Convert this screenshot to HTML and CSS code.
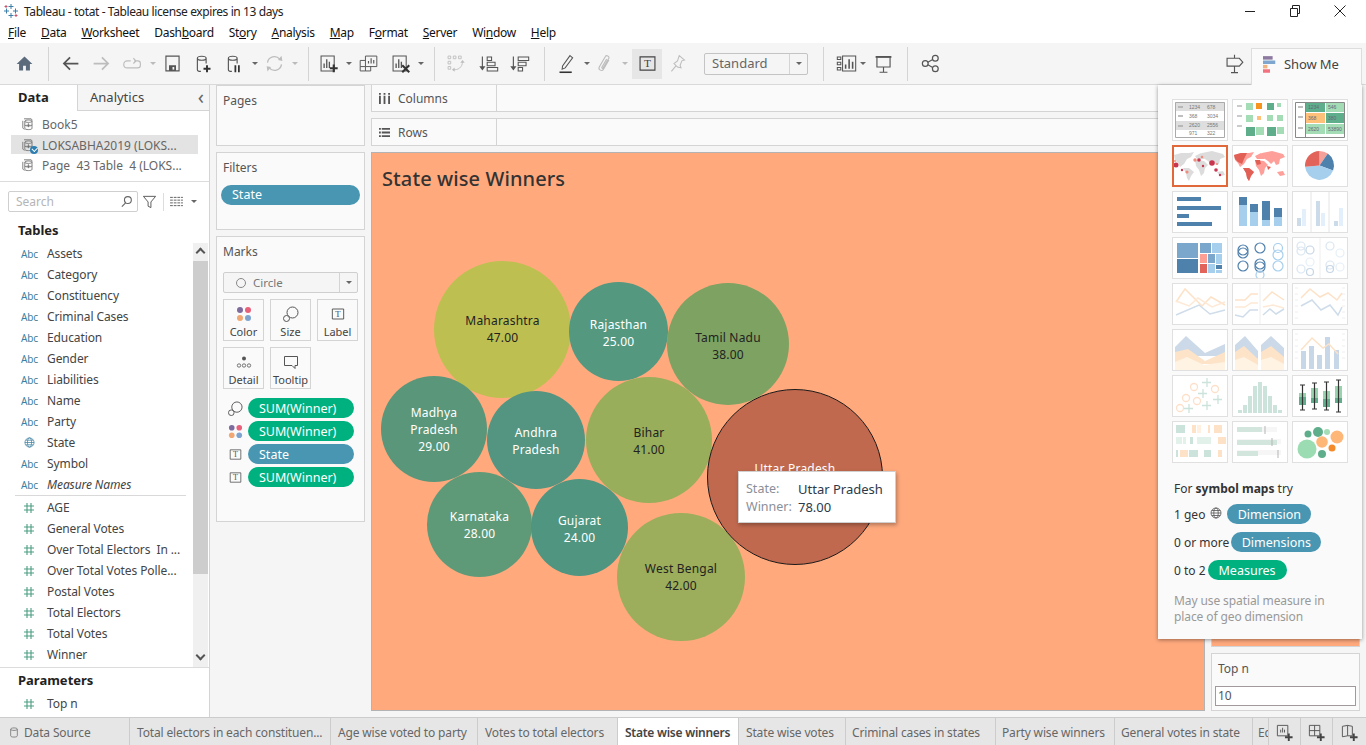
FILE: index.html
```html
<!DOCTYPE html>
<html lang="en">
<head>
  <meta charset="UTF-8" />
  <title>Tableau - totat</title>
  <link rel="stylesheet" href="styles.css">
</head>
<body>
  <!-- icon sprite -->
  <svg class="sprite" xmlns="http://www.w3.org/2000/svg">
    <symbol id="i-home" viewBox="0 0 24 24"><path fill="#5b6b7c" d="M12 4 3 12.6h2.8V20h4.6v-5.4h3.2V20h4.6v-7.4H21z"/></symbol>
    <symbol id="i-back" viewBox="0 0 24 24"><path fill="none" stroke="currentColor" stroke-width="2" d="M21 12H5M11.5 5 4.5 12l7 7"/></symbol>
    <symbol id="i-fwd" viewBox="0 0 24 24"><path fill="none" stroke="currentColor" stroke-width="2" d="M3 12h16M12.500 5l7 7-7 7"/></symbol>
    <symbol id="i-redo" viewBox="0 0 24 24"><path fill="none" stroke="currentColor" stroke-width="1.3" d="M10 9H6a3 3 0 0 0 0 8h12a3 3 0 0 0 3-3v-2a3 3 0 0 0-3-3h-4M13 6l3 3-3 3"/></symbol>
    <symbol id="i-save" viewBox="0 0 24 24"><path fill="none" stroke="currentColor" stroke-width="1.3" d="M4.500 3.500h15v17h-15z"/><path fill="currentColor" d="M8 14h8v6.500H8z"/><path fill="#f5f5f5" d="M12 16h2v3h-2z"/></symbol>
    <symbol id="i-dsnew" viewBox="0 0 24 24"><path fill="none" stroke="currentColor" stroke-width="1.3" d="M5 6c0-3 10-3 10 0s-10 3-10 0v13c0 1.500 2 2 4 2M15 6v6"/><path fill="none" stroke="#333" stroke-width="2.200" d="M16 14v8M12 18h8"/></symbol>
    <symbol id="i-dspause" viewBox="0 0 24 24"><path fill="none" stroke="currentColor" stroke-width="1.300" d="M5 6c0-3 10-3 10 0s-10 3-10 0v13c0 1.500 2 2 4 2M15 6v6"/><path fill="none" stroke="#333" stroke-width="2" d="M13 14v8M17 14v8"/></symbol>
    <symbol id="i-refresh" viewBox="0 0 24 24"><path fill="none" stroke="currentColor" stroke-width="1.500" d="M4 11a8 8 0 0 1 14-4M20 13a8 8 0 0 1-14 4"/><path fill="currentColor" d="m16 8 5 1-1-6zM8 16l-5-1 1 6z"/></symbol>
    <symbol id="i-sheetnew" viewBox="0 0 24 24"><path fill="none" stroke="currentColor" stroke-width="1.200" d="M3.500 3.500h15v17h-15z"/><path fill="none" stroke="currentColor" stroke-width="1.500" d="M7 17v-5M10 17V7M13 17v-7"/><path fill="none" stroke="#333" stroke-width="2.400" d="M18 13v9M13.500 17.500h9"/></symbol>
    <symbol id="i-dup" viewBox="0 0 24 24"><path fill="none" stroke="currentColor" stroke-width="1.100" d="M8.500 3.500h13v12h-13zM8.500 15.500h-6v-7h6M8.500 20.500h6V15.500M2.500 15.500v5h6v-5"/><path fill="none" stroke="currentColor" stroke-width="1.300" d="M12 12V9M15 12V6M18 12V8"/></symbol>
    <symbol id="i-clear" viewBox="0 0 24 24"><path fill="none" stroke="currentColor" stroke-width="1.200" d="M3.500 3.500h15v17h-15z"/><path fill="none" stroke="currentColor" stroke-width="1.500" d="M7 17v-5M10 17V7M13 17v-7"/><path fill="none" stroke="#333" stroke-width="2.400" d="m14 14 8 8M22 14l-8 8"/></symbol>
    <symbol id="i-swap" viewBox="0 0 24 24"><path fill="none" stroke="currentColor" stroke-width="1" d="M3.500 3.500h3v3h-3zM9.500 3.500h3v3h-3zM15.500 3.500h3v3h-3zM3.500 9.500h3v3h-3zM3.500 15.500h3v3h-3zM9 19c6 1 11-3 11-9"/><path fill="currentColor" d="m17.500 11 2.500-3 2.500 3zM11 16.500 8 19l3 2.500z"/></symbol>
    <symbol id="i-sortup" viewBox="0 0 24 24"><path fill="none" stroke="currentColor" stroke-width="1.300" d="M5 4v14"/><path fill="currentColor" d="M1.500 15h7L5 20z"/><path fill="none" stroke="currentColor" stroke-width="1.200" d="M10.500 4.500h5v4h-5zM10.500 10.500h9v4h-9zM10.500 16.500h12v4h-12z"/></symbol>
    <symbol id="i-sortdn" viewBox="0 0 24 24"><path fill="none" stroke="currentColor" stroke-width="1.300" d="M5 4v14"/><path fill="currentColor" d="M1.500 15h7L5 20z"/><path fill="none" stroke="currentColor" stroke-width="1.200" d="M10.500 4.500h12v4h-12zM10.500 10.500h9v4h-9zM10.500 16.500h5v4h-5z"/></symbol>
    <symbol id="i-pen" viewBox="0 0 24 24"><path fill="none" stroke="currentColor" stroke-width="1.200" d="M16 3l3 2.500L10.500 17 7 18.500l.5-3.800z"/><path fill="none" stroke="#333" stroke-width="1.800" d="M4 22h14"/></symbol>
    <symbol id="i-clip" viewBox="0 0 24 24"><path fill="none" stroke="currentColor" stroke-width="1.300" d="M17 8l-6.500 11c-1.500 2.500-6 0-4.500-3l7-12c1-2 5-.5 4 2l-6.500 11c-.5 1-2 .3-1.500-.8L14.500 7"/></symbol>
    <symbol id="i-t" viewBox="0 0 24 24"><path fill="none" stroke="currentColor" stroke-width="1.300" d="M3.500 4.500h17v15h-17z"/><text x="12" y="16.500" text-anchor="middle" font-family="Liberation Serif, serif" font-size="13" fill="currentColor">T</text></symbol>
    <symbol id="i-pin" viewBox="0 0 24 24"><path fill="none" stroke="currentColor" stroke-width="1.200" d="M14 3l6 5-3 1-2 5 1 3-4-1-4-4 4-3zM10 15l-5 6"/></symbol>
    <symbol id="i-viz" viewBox="0 0 24 24"><path fill="none" stroke="currentColor" stroke-width="1.200" d="M1.500 4.500h4v3h-4zM1.500 10.500h4v3h-4zM1.500 16.500h4v3h-4zM7.500 3.500h15v17h-15z"/><path fill="none" stroke="currentColor" stroke-width="1.800" d="M11 18v-5M15 18V7M19 18v-8"/></symbol>
    <symbol id="i-present" viewBox="0 0 24 24"><path fill="none" stroke="currentColor" stroke-width="1.300" d="M4.500 5v11h15V5M12 16v6M7.500 22h9"/><path fill="none" stroke="currentColor" stroke-width="2.200" d="M3 4.500h18"/></symbol>
    <symbol id="i-share" viewBox="0 0 24 24"><g fill="none" stroke="currentColor" stroke-width="1.400"><circle cx="6" cy="12" r="3.300"/><circle cx="17.500" cy="6" r="3.300"/><circle cx="17.500" cy="18" r="3.300"/><path d="m9 10.500 5.500-3M9 13.500l5.500 3"/></g></symbol>
    <symbol id="i-sign" viewBox="0 0 24 24"><path fill="none" stroke="currentColor" stroke-width="1.300" d="M12 2v4M3.500 6h14l4 4.500-4 4.500h-14zM12 15v7.500M8 22.500h8"/></symbol>
    <symbol id="i-showme" viewBox="0 0 16 20"><path fill="#8d7aa0" d="M0 1h11v4H0z"/><path fill="#7fa6cf" d="M0 6h14v4H0z"/><path fill="#f0b27f" d="M0 11h5v4H0z"/><path fill="#f4727f" d="M0 16h8v4H0z"/></symbol>
    <symbol id="i-ds" viewBox="0 0 20 20"><g fill="none" stroke="currentColor" stroke-width="1"><path d="M5 3.500h9l1.500 2M3.500 6v9l2 2"/><path d="M6 6.500c0-2 9-2 9 0s-9 2-9 0v9c0 2 9 2 9 0v-9"/><path d="M6 11c0 2 9 2 9 0M10.500 9v5M8 11.500h5"/></g></symbol>
    <symbol id="i-search" viewBox="0 0 14 14"><g fill="none" stroke="#666" stroke-width="1.200"><circle cx="8.500" cy="5.500" r="3.700"/><path d="M6 8.500 2 12.500"/></g></symbol>
    <symbol id="i-funnel" viewBox="0 0 16 16"><path fill="none" stroke="#555" stroke-width="1" d="M1.500 2.500h13l-5 6v6l-3-1.500V8.500z"/></symbol>
    <symbol id="i-list" viewBox="0 0 14 12"><path fill="none" stroke="#555" stroke-width="1" stroke-dasharray="3 1" d="M0 1.500h3M0 4.500h3M0 7.500h3M0 10.500h3M4 1.500h10M4 4.500h10M4 7.500h10M4 10.500h10"/></symbol>
    <symbol id="i-hash" viewBox="0 0 12 12"><path fill="none" stroke="#4b9e82" stroke-width="1.100" d="M4 1v10M8 1v10M1 4h10M1 8h10"/></symbol>
    <symbol id="i-globe" viewBox="0 0 12 12"><g fill="none" stroke="currentColor" stroke-width=".8"><circle cx="6" cy="6" r="5"/><ellipse cx="6" cy="6" rx="2.200" ry="5"/><path d="M1 6h10M1.800 3.500h8.400M1.800 8.500h8.400"/></g></symbol>
    <symbol id="i-cols" viewBox="0 0 12 12"><path fill="#555" d="M0 3h2v9H0zM5 3h2v9H5zM10 3h2v9h-2zM0 0h2v2H0zM5 0h2v2H5zM10 0h2v2h-2z"/></symbol>
    <symbol id="i-rows" viewBox="0 0 12 12"><path fill="#555" d="M3 1h9v2H3zM3 5h9v2H3zM3 9h9v2H3zM0 1h2v2H0zM0 5h2v2H0zM0 9h2v2H0z"/></symbol>
    <symbol id="i-dots" viewBox="0 0 16 16"><circle cx="4" cy="4" r="3" fill="#7d6b9e"/><circle cx="12" cy="4" r="3" fill="#e8607a"/><circle cx="4" cy="12" r="3" fill="#f0a773"/><circle cx="12" cy="12" r="3" fill="#7fa3cf"/></symbol>
    <symbol id="i-size" viewBox="0 0 16 16"><g fill="#fafafa" stroke="#555" stroke-width="1"><circle cx="9.500" cy="6.500" r="5.500"/><circle cx="3.500" cy="12.500" r="3"/></g></symbol>
    <symbol id="i-detail" viewBox="0 0 16 12"><circle cx="8" cy="2.500" r="2" fill="#555"/><g fill="none" stroke="#555" stroke-width=".8"><circle cx="3" cy="9.500" r="1.700"/><circle cx="8" cy="9.500" r="1.700"/><circle cx="13" cy="9.500" r="1.700"/></g></symbol>
    <symbol id="i-tip" viewBox="0 0 16 16"><path fill="none" stroke="#555" stroke-width="1" d="M1.500 2.500h13v9h-2.500v3l-3-3h-7.500z"/></symbol>
    <symbol id="i-newdash" viewBox="0 0 20 20"><path fill="none" stroke="#555" stroke-width="1" d="M2.500 2.500h11v11h-11zM2.500 8h11M8 2.500v11"/><path fill="none" stroke="#444" stroke-width="2" d="M14.500 11v8M10.500 15h8"/></symbol>
    <symbol id="i-newstory" viewBox="0 0 20 20"><path fill="none" stroke="#555" stroke-width="1" d="M2.500 3.500 8 2.500l5 1v10H8l-5.500 1zM8 2.500v11"/><path fill="none" stroke="#444" stroke-width="2" d="M14.500 11v8M10.500 15h8"/></symbol>
    <symbol id="i-newsheet" viewBox="0 0 20 20"><path fill="none" stroke="#555" stroke-width="1" d="M2.500 2.500h11v11h-11z"/><path fill="none" stroke="#555" d="M6 10V7M8 10V5M10 10V7"/><path fill="none" stroke="#444" stroke-width="2" d="M14.500 11v8M10.500 15h8"/></symbol>
    <symbol id="world" viewBox="0 0 56 42"><path d="M2 10l7-2 8 0 5-1-3 5-4 2-3 5-4 3-2-4-3-3zM11 23l6 0 5 4-3 4-2 5-2-3-1-5zM23 11l6-3 4 2-1 4-7 0zM23 15l9 1 4 4-3 3-1 5-3 3-2-6-3-4zM30 8l10-2 11 3 2 3-5 2-1 5-3 1-2-4-3 3-3-3-3-2-3-1zM45 27l6-1 2 4-5 1z"/></symbol>
  </svg>

  <div class="titlebar">
    <svg class="app-logo" viewBox="0 0 16 16"><g fill="none" stroke="#3d7ea6" stroke-width="1"><path d="M8 1v5M5.500 3.500h5M8 10v5M5.500 12.500h5M1 8h5M3.500 5.500v5M10 8h5M12.500 5.500v5"/></g><g fill="none" stroke="#c8546b" stroke-width="1"><path d="M3 2v3M1.500 3.500h3M13 11v3M11.500 12.500h3"/></g></svg>
    <span class="title-text">Tableau - totat - Tableau license expires in 13 days</span>
    <div class="win-controls">
      <svg viewBox="0 0 12 12"><path stroke="#222" d="M1 6.500h10"/></svg>
      <svg viewBox="0 0 12 12"><path fill="none" stroke="#222" d="M1.500 3.500h7v8h-7zM3.500 3.500v-3h7v8h-2"/></svg>
      <svg viewBox="0 0 12 12"><path stroke="#222" d="m.5.500 11 11M11.500.5l-11 11"/></svg>
    </div>
  </div>

  <div class="menubar">
    <span><u>F</u>ile</span><span><u>D</u>ata</span><span><u>W</u>orksheet</span><span>Dash<u>b</u>oard</span><span>St<u>o</u>ry</span><span><u>A</u>nalysis</span><span><u>M</u>ap</span><span>F<u>o</u>rmat</span><span><u>S</u>erver</span><span>Wi<u>n</u>dow</span><span><u>H</u>elp</span>
  </div>

  <div class="toolbar">
    <span class="tool home"><svg><use href="#i-home"/></svg></span>
    <i class="sep"></i>
    <span class="tool ml6"><svg><use href="#i-back"/></svg></span>
    <span class="tool off"><svg><use href="#i-fwd"/></svg></span>
    <span class="tool off"><svg><use href="#i-redo"/></svg></span><i class="caret off"></i>
    <span class="tool"><svg><use href="#i-save"/></svg></span>
    <span class="tool"><svg><use href="#i-dsnew"/></svg></span>
    <span class="tool"><svg><use href="#i-dspause"/></svg></span><i class="caret"></i>
    <span class="tool off"><svg><use href="#i-refresh"/></svg></span><i class="caret off"></i>
    <i class="sep ml9"></i>
    <span class="tool ml4"><svg><use href="#i-sheetnew"/></svg></span><i class="caret"></i>
    <span class="tool"><svg><use href="#i-dup"/></svg></span>
    <span class="tool ml1"><svg><use href="#i-clear"/></svg></span><i class="caret"></i>
    <i class="sep ml9"></i>
    <span class="tool ml5 off"><svg><use href="#i-swap"/></svg></span>
    <span class="tool ml2"><svg><use href="#i-sortup"/></svg></span>
    <span class="tool"><svg><use href="#i-sortdn"/></svg></span>
    <i class="sep ml9"></i>
    <span class="tool ml6"><svg><use href="#i-pen"/></svg></span><i class="caret"></i>
    <span class="tool off back2"><svg><use href="#i-clip"/></svg></span><i class="caret off"></i>
    <span class="tool t-on"><svg><use href="#i-t"/></svg></span>
    <span class="tool off"><svg><use href="#i-pin"/></svg></span>
    <div class="fit-combo"><span>Standard</span><b><i class="caret"></i></b></div>
    <i class="sep ml15"></i>
    <span class="tool ml7"><svg><use href="#i-viz"/></svg></span><i class="caret back2"></i>
    <span class="tool"><svg><use href="#i-present"/></svg></span>
    <i class="sep ml8"></i>
    <span class="tool ml7"><svg><use href="#i-share"/></svg></span>
    <span class="tool push"><svg><use href="#i-sign"/></svg></span>
    <div class="showme-tab"><svg><use href="#i-showme"/></svg><span>Show Me</span></div>
  </div>

  <div class="main">
    <!-- data pane -->
    <aside class="data-pane">
      <div class="pane-tabs">
        <div class="pane-tab active">Data</div>
        <div class="pane-tab">Analytics<span class="collapse">&#8249;</span></div>
      </div>
      <div class="sources">
        <div class="source"><svg><use href="#i-ds"/></svg>Book5</div>
        <div class="source current"><svg><use href="#i-ds"/></svg><em></em>LOKSABHA2019 (LOKS...</div>
        <div class="source"><svg><use href="#i-ds"/></svg>Page&nbsp; 43 Table&nbsp; 4 (LOKS...</div>
      </div>
      <div class="search-row">
        <div class="search-box"><span>Search</span><svg><use href="#i-search"/></svg></div>
        <svg class="funnel"><use href="#i-funnel"/></svg>
        <i class="mini-sep"></i>
        <svg class="list-ico"><use href="#i-list"/></svg>
        <i class="caret"></i>
      </div>
      <h4 class="pane-head">Tables</h4>
      <div class="field-wrap">
        <div class="fields">
          <div class="field"><span class="abc">Abc</span>Assets</div>
          <div class="field"><span class="abc">Abc</span>Category</div>
          <div class="field"><span class="abc">Abc</span>Constituency</div>
          <div class="field"><span class="abc">Abc</span>Criminal Cases</div>
          <div class="field"><span class="abc">Abc</span>Education</div>
          <div class="field"><span class="abc">Abc</span>Gender</div>
          <div class="field"><span class="abc">Abc</span>Liabilities</div>
          <div class="field"><span class="abc">Abc</span>Name</div>
          <div class="field"><span class="abc">Abc</span>Party</div>
          <div class="field"><span class="abc geo"><svg><use href="#i-globe"/></svg></span>State</div>
          <div class="field"><span class="abc">Abc</span>Symbol</div>
          <div class="field italic"><span class="abc">Abc</span>Measure Names</div>
          <div class="field-line"></div>
          <div class="field"><span class="num"><svg><use href="#i-hash"/></svg></span>AGE</div>
          <div class="field"><span class="num"><svg><use href="#i-hash"/></svg></span>General Votes</div>
          <div class="field"><span class="num"><svg><use href="#i-hash"/></svg></span>Over Total Electors&nbsp; In ...</div>
          <div class="field"><span class="num"><svg><use href="#i-hash"/></svg></span>Over Total Votes Polle...</div>
          <div class="field"><span class="num"><svg><use href="#i-hash"/></svg></span>Postal Votes</div>
          <div class="field"><span class="num"><svg><use href="#i-hash"/></svg></span>Total Electors</div>
          <div class="field"><span class="num"><svg><use href="#i-hash"/></svg></span>Total Votes</div>
          <div class="field"><span class="num"><svg><use href="#i-hash"/></svg></span>Winner</div>
        </div>
        <div class="scrollbar">
          <span class="arrow up"></span>
          <span class="thumb"></span>
          <span class="arrow down"></span>
        </div>
      </div>
      <div class="params">
        <h4 class="pane-head">Parameters</h4>
        <div class="field"><span class="num"><svg><use href="#i-hash"/></svg></span>Top n</div>
      </div>
    </aside>

    <!-- pages / filters / marks -->
    <div class="cards">
      <section class="card pages"><h5>Pages</h5></section>
      <section class="card filters">
        <h5>Filters</h5>
        <div class="pill dim filter-pill">State</div>
      </section>
      <section class="card marks">
        <h5>Marks</h5>
        <div class="mark-combo">
          <span class="ring"></span><span>Circle</span><b><i class="caret"></i></b>
        </div>
        <div class="mark-btns">
          <div class="mark-btn"><svg><use href="#i-dots"/></svg>Color</div>
          <div class="mark-btn"><svg><use href="#i-size"/></svg>Size</div>
          <div class="mark-btn"><svg><use href="#i-t"/></svg>Label</div>
          <div class="mark-btn"><svg><use href="#i-detail"/></svg>Detail</div>
          <div class="mark-btn"><svg><use href="#i-tip"/></svg>Tooltip</div>
        </div>
        <div class="mark-pills">
          <div class="mark-row"><svg><use href="#i-size"/></svg><div class="pill mea">SUM(Winner)</div></div>
          <div class="mark-row"><svg><use href="#i-dots"/></svg><div class="pill mea">SUM(Winner)</div></div>
          <div class="mark-row"><svg><use href="#i-t"/></svg><div class="pill dim">State</div></div>
          <div class="mark-row"><svg><use href="#i-t"/></svg><div class="pill mea">SUM(Winner)</div></div>
        </div>
      </section>
    </div>

    <!-- worksheet -->
    <div class="sheet">
      <div class="shelf"><div class="shelf-label"><svg><use href="#i-cols"/></svg>Columns</div></div>
      <div class="shelf"><div class="shelf-label"><svg><use href="#i-rows"/></svg>Rows</div></div>
      <div class="view-row">
        <div class="viz">
          <h2 class="viz-title">State wise Winners</h2>
          <div class="bubble b-maha dark">Maharashtra<br>47.00</div>
          <div class="bubble b-raj">Rajasthan<br>25.00</div>
          <div class="bubble b-tn dark">Tamil Nadu<br>38.00</div>
          <div class="bubble b-mp">Madhya<br>Pradesh<br>29.00</div>
          <div class="bubble b-ap">Andhra<br>Pradesh</div>
          <div class="bubble b-bihar dark">Bihar<br>41.00</div>
          <div class="bubble b-kar">Karnataka<br>28.00</div>
          <div class="bubble b-guj">Gujarat<br>24.00</div>
          <div class="bubble b-wb dark">West Bengal<br>42.00</div>
          <div class="bubble b-up">Uttar Pradesh<br>78.00</div>
          <div class="tooltip">
            <span class="tip-key">State:</span><span>Uttar Pradesh</span>
            <span class="tip-key">Winner:</span><span>78.00</span>
          </div>
        </div>
        <div class="side">
          <div class="legend"></div>
          <div class="param-card">
            <h5>Top n</h5>
            <div class="param-input">10</div>
          </div>
        </div>
      </div>

      <!-- show me flyout -->
      <div class="showme">
        <div class="thumbs">
          <svg class="thumb-tile" viewBox="0 0 56 42"><path fill="#dedede" d="M3 3h50v9H3zM3 22h50v9H3z"/><path fill="none" stroke="#aaa" d="M3.500 3.500h49v35h-49z"/><path stroke="#aaa" stroke-width="1.500" d="M6 8h5M6 17h5M6 27h5"/><g font-family="Liberation Sans, sans-serif" font-size="5" fill="#777"><text x="17" y="10">1234</text><text x="35" y="10">678</text><text x="17" y="19">368</text><text x="35" y="19">3034</text><text x="17" y="28">2620</text><text x="35" y="28">2556</text><text x="17" y="36">971</text><text x="35" y="36">322</text></g></svg>
          <svg class="thumb-tile" viewBox="0 0 56 42"><path stroke="#bbb" stroke-width="1.500" d="M5 7h5M5 17h5M5 27h5"/><path fill="#a3dcb5" d="M14 4h7v7h-7zM45 4h4v4h-4zM14 16h7v7h-7zM35 16h6v6h-6zM45 16h6v6h-6zM24 28h8v8h-8zM45 28h7v7h-7z"/><path fill="#f7941d" d="M24 4h6v6h-6z"/><path fill="#ffc07a" d="M25 17h4v4h-4z"/><path fill="#5fae8b" d="M35 4h7v7h-7zM14 28h9v9h-9zM35 28h9v9h-9z"/></svg>
          <svg class="thumb-tile" viewBox="0 0 56 42"><path fill="#5fae8b" d="M14 3h19v10H14zM34 14h18v10H34z"/><path fill="#a3dcb5" d="M34 3h18v10H34zM14 25h19v10H14zM34 25h18v10H34z"/><path fill="#ffc07a" d="M14 14h19v10H14z"/><path fill="none" stroke="#888" d="M3.500 3.500h49v35h-49z"/><path stroke="#888" d="M13.500 3v36"/><path stroke="#aaa" stroke-width="1.500" d="M6 8h5M6 18h5M6 29h5"/><g font-family="Liberation Sans, sans-serif" font-size="5" fill="#667"><text x="16" y="10">1234</text><text x="36" y="10">546</text><text x="16" y="21">368</text><text x="36" y="21">380</text><text x="16" y="32">2620</text><text x="36" y="32">53890</text></g></svg>

          <svg class="thumb-tile selected" viewBox="0 0 56 42"><use href="#world" fill="#dcdcdc"/><g fill="#c9364f"><circle cx="4" cy="20" r="2.500"/><circle cx="40" cy="18" r="2.800"/><circle cx="27" cy="15" r="1.800"/><circle cx="44" cy="25" r="1.800"/><circle cx="10" cy="25" r="1.200"/><circle cx="31" cy="21" r="1.200"/><circle cx="48" cy="30" r="1.200"/></g><g fill="#ef8d7e"><circle cx="23" cy="15" r="1.700"/><circle cx="15" cy="27" r="1.600"/><circle cx="30" cy="12" r="1.300"/><circle cx="45" cy="19" r="1.100"/><circle cx="3" cy="16" r="1"/></g></svg>
          <svg class="thumb-tile" viewBox="0 0 56 42"><use href="#world" fill="#ff9f9a"/><path fill="#e15f55" d="M2 10l7-2 6 0-3 6-2 5-4-2-3-3zM11 23l6 0 5 4-3 4-2 5-2-3-1-5zM36 25l-1-4 4 1zM23 15l5 0 1 4-4 1z"/></svg>
          <svg class="thumb-tile" viewBox="0 0 56 42"><path fill="#f5a19b" d="M27.500 20.500V6a14.500 14.500 0 0 1 8.300 2.600z"/><path fill="#4f81ad" d="M27.500 20.500 35.800 8.600a14.500 14.500 0 0 1 5.300 16.900z"/><path fill="#a6cfee" d="M27.500 20.500 41.100 25.500A14.500 14.500 0 0 1 13.100 21.800z"/><path fill="#e1635a" d="M27.500 20.500 13.100 21.800A14.500 14.500 0 0 1 27.500 6z"/></svg>

          <svg class="thumb-tile" viewBox="0 0 56 42"><path fill="#4f81ad" d="M5 6h24v4H5zM5 15h44v4H5zM5 23h12v4H5zM5 31h35v4H5z"/></svg>
          <svg class="thumb-tile" viewBox="0 0 56 42"><path fill="#a6cfee" d="M7 14h8v21H7zM18 21h8v14h-8zM30 29h8v6h-8zM42 26h8v9h-8z"/><path fill="#4f81ad" d="M7 6h8v8H7zM18 13h8v8h-8zM30 10h8v19h-8zM42 17h8v9h-8z"/></svg>
          <svg class="thumb-tile" viewBox="0 0 56 42"><path stroke="#e4e4e4" d="M19 0v42M37 0v42"/><path fill="#cbdbea" d="M5 27h4v8H5zM24 10h4v25h-4zM42 30h4v5h-4z"/><path fill="#e3effa" d="M10 18h4v17h-4zM29 22h4v13h-4zM47 17h4v18h-4z"/></svg>

          <svg class="thumb-tile" viewBox="0 0 56 42"><path fill="#7ba7cc" d="M5 6h21v15H5zM28 6h11v10H28zM36 17h7v9h-7z"/><path fill="#4f81ad" d="M5 22h21v14H5zM44 28h6v4h-6z"/><path fill="#a6cfee" d="M40 6h10v10H40zM36 27h7v9h-7zM44 17h6v10h-6zM44 33h6v3h-6z"/><path fill="#ff9f94" d="M28 17h7v9h-7z"/><path fill="#e1635a" d="M28 27h7v9h-7z"/></svg>
          <svg class="thumb-tile" viewBox="0 0 56 42"><g fill="none" stroke-width="1.200"><g stroke="#4f81ad"><circle cx="11" cy="13" r="5"/><circle cx="11" cy="16" r="5"/><circle cx="28" cy="11" r="5"/><circle cx="11" cy="29" r="5"/><circle cx="28" cy="27" r="5"/><circle cx="28" cy="30" r="5"/></g><g stroke="#a6cfee"><circle cx="46" cy="11" r="4.500"/><circle cx="46" cy="18" r="5"/><circle cx="46" cy="29" r="5"/><circle cx="28" cy="38" r="4"/></g></g></svg>
          <svg class="thumb-tile" viewBox="0 0 56 42"><path stroke="#eee" d="M28 0v42"/><g fill="none" stroke-width="1.200"><g stroke="#dbe6f1"><circle cx="9" cy="9" r="4"/><circle cx="9" cy="14" r="4"/><circle cx="9" cy="32" r="4"/><circle cx="38" cy="9" r="4"/><circle cx="38" cy="28" r="4"/></g><g stroke="#c6d6e6"><circle cx="18" cy="13" r="4"/><circle cx="18" cy="35" r="3.500"/><circle cx="38" cy="32" r="3.500"/></g><g stroke="#e6f0f8"><circle cx="48" cy="16" r="4"/><circle cx="48" cy="30" r="4"/><circle cx="18" cy="25" r="4"/></g></g></svg>

          <svg class="thumb-tile" viewBox="0 0 56 42"><g fill="none" stroke-width="1.500"><path stroke="#fde2c8" d="M4 19 13 6l17 17 9-9 14 8"/><path stroke="#fee9d6" d="M4 18l13 5 9-8 14 9 13-5"/><path stroke="#cfdcea" d="M4 32l23-10 11 9 15-4"/></g></svg>
          <svg class="thumb-tile" viewBox="0 0 56 42"><path stroke="#eee" d="M28 0v42"/><g fill="none" stroke-width="1.500"><path stroke="#fde2c8" d="M3 17h10l6-6h7M31 18l9-9 12 8"/><path stroke="#fee9d6" d="M3 24h10l6-4h7M31 24l10-2 11 3"/><path stroke="#cfdcea" d="M3 32l8 2 7-7h8M31 32l7-6 6 5 8-5"/></g></svg>
          <svg class="thumb-tile" viewBox="0 0 56 42"><path stroke="#eee" d="M3 5h3M3 11h3M3 17h3M3 23h3M3 29h3M3 35h3M50 5h3M50 11h3M50 17h3M50 23h3M50 29h3M50 35h3"/><g fill="none" stroke-width="1.500"><path stroke="#fde2c8" d="M9 15l9-9 10 8 8-4 9 7 5-7"/><path stroke="#cfdcea" d="M9 23l11-6 9 10 9-5 8 10 4-8"/></g></svg>

          <svg class="thumb-tile" viewBox="0 0 56 42"><path fill="#ccd9e8" d="M3 18 14 7l19 17 20-9v12H3z"/><path fill="#fde3c8" d="M3 23l13-3 17 12 20-9v12H3z"/><path fill="#fff3e3" d="M3 33l12-5 17 8 21-3v8H3z"/></svg>
          <svg class="thumb-tile" viewBox="0 0 56 42"><path fill="#ccd9e8" d="M3 16 13 7l13 15V41H3zM29 16l10-9 13 12-0 22H29z"/><path fill="#fde3c8" d="M3 23l9-6 14 13v11H3zM29 23l10-6 13 11v13H29z"/><path fill="#fff3e3" d="M3 31l9-3 14 8v5H3zM29 31l10-3 13 7v6H29z"/></svg>
          <svg class="thumb-tile" viewBox="0 0 56 42"><path stroke="#eee" d="M3 5h3M3 11h3M3 17h3M3 23h3M3 29h3M50 5h3M50 11h3M50 17h3M50 23h3M50 29h3"/><path fill="#c8d7e7" d="M9 22h5v18H9zM17 17h5v23h-5zM25 26h5v14h-5zM33 8h5v32h-5zM42 21h5v19h-5z"/><path fill="none" stroke="#fde2c8" stroke-width="1.500" d="M9 21l11-12 11 10 6-4 9 10"/></svg>

          <svg class="thumb-tile" viewBox="0 0 56 42"><g fill="none" stroke="#fde0ca" stroke-width="1.300"><circle cx="22" cy="12" r="3.500"/><circle cx="14" cy="23" r="3.500"/><circle cx="25" cy="26" r="3.500"/><circle cx="43" cy="14" r="3.500"/><circle cx="8" cy="33" r="3.500"/></g><path stroke="#cbe3da" stroke-width="1.300" fill="none" d="M35 3v9M30 7.500h9M31 14v9M26 18.500h9M46 20v9M41 24.500h9M35 26v9M30 30.500h9M17 29v9M12 33.500h9"/></svg>
          <svg class="thumb-tile" viewBox="0 0 56 42"><path fill="#cbe3da" d="M6 35h4v3H6zM11 30h4v8h-4zM16 21h4v17h-4zM21 11h4v27h-4zM26 7h4v31h-4zM31 11h4v27h-4zM36 21h4v17h-4zM41 30h4v8h-4zM46 35h4v3h-4z"/></svg>
          <svg class="thumb-tile" viewBox="0 0 56 42"><path fill="#98d3ae" d="M7 18h7v5H7zM19 13h7v10h-7zM31 16h7v8h-7zM43 11h7v12h-7z"/><path fill="#5fae8b" d="M7 22h7v8H7zM19 23h7v5h-7zM31 24h7v8h-7zM43 23h7v5h-7z"/><path stroke="#333" stroke-width="1.200" fill="none" d="M8 10h5M10.500 10v25M8 35h5M20 8h5M22.500 8v26M20 34h5M32 7h5M34.500 7v28M32 35h5M44 5h5M46.500 5v32M44 37h5"/></svg>

          <svg class="thumb-tile" viewBox="0 0 56 42"><path fill="#cbe3da" d="M4 4h9v8H4zM18 16h3v7h-3zM17 29h9v7h-9zM32 29h7v7h-7zM4 29h2v7H4z"/><path fill="#e2f1ea" d="M4 16h6v7H4zM11 16h3v7h-3zM25 16h14v7H25zM24 29h-1z"/><path fill="#fde2c8" d="M20 4h4v8h-4zM36 4h2v8h-2zM42 4h8v8h-8zM46 16h8v7h-8zM8 29h8v7H8zM46 29h4v7h-4z"/><path fill="#fff0e0" d="M25 4h4v8h-4z"/></svg>
          <svg class="thumb-tile" viewBox="0 0 56 42"><path fill="#f6f6f6" d="M5 6h40v5H5zM5 18h44v5H5zM5 29h44v5H5z"/><path fill="#d3e6dd" d="M5 6h25v5H5zM5 19h40v5H5zM5 30h21v5H5z"/><path stroke="#b5b5b5" stroke-width="1" d="M33 5v8M40 17v8M46 29v8"/></svg>
          <svg class="thumb-tile" viewBox="0 0 56 42"><circle cx="15" cy="28" r="9.500" fill="#9cdcb2"/><circle cx="16" cy="13" r="3.500" fill="#5fae8b"/><circle cx="26" cy="11" r="5" fill="#5fae8b"/><circle cx="35" cy="11" r="3" fill="#a3dcb5"/><circle cx="45" cy="16" r="6.500" fill="#ffb777"/><circle cx="30" cy="21" r="5.800" fill="#ffb777"/><circle cx="40" cy="27" r="3.500" fill="#f48a2a"/><circle cx="30" cy="33" r="4" fill="#5fae8b"/></svg>
        </div>
        <p class="hint">For <strong>symbol maps</strong> try</p>
        <div class="req"><span>1 geo</span><svg class="req-globe"><use href="#i-globe"/></svg><div class="pill dim req-dim">Dimension</div></div>
        <div class="req"><span>0 or more</span><div class="pill dim req-dims">Dimensions</div></div>
        <div class="req"><span>0 to 2</span><div class="pill mea req-mea">Measures</div></div>
        <p class="note">May use spatial measure in place of geo dimension</p>
      </div>
    </div>
  </div>

  <div class="tabbar">
    <div class="tab src"><svg viewBox="0 0 12 14"><path fill="none" stroke="#777" d="M2 3c0-2 8-2 8 0s-8 2-8 0v8c0 2 8 2 8 0V3"/></svg>Data Source</div>
    <div class="tab t1">Total electors in each constituen...</div>
    <div class="tab t2">Age wise voted to party</div>
    <div class="tab t3">Votes to total electors</div>
    <div class="tab t4 active">State wise winners</div>
    <div class="tab t5">State wise votes</div>
    <div class="tab t6">Criminal cases in states</div>
    <div class="tab t7">Party wise winners</div>
    <div class="tab t8">General votes in state</div>
    <div class="tab t9">Ed</div>
    <div class="tab add"><svg><use href="#i-newsheet"/></svg></div>
    <div class="tab add"><svg><use href="#i-newdash"/></svg></div>
    <div class="tab add"><svg><use href="#i-newstory"/></svg></div>
  </div>
</body>
</html>
```
FILE: styles.css
```css
* {
  margin: 0;
  padding: 0;
  box-sizing: border-box;
}

html, body {
  height: 745px;
  overflow: hidden;
}

body {
  display: flex;
  flex-direction: column;
  width: 1366px;
  background: #fff;
  color: #333;
  font-family: "Noto Sans", sans-serif;
  font-size: 12px;
}

.sprite {
  position: absolute;
  width: 0;
  height: 0;
}

/* title + menu */
.titlebar {
  display: flex;
  align-items: center;
  height: 22px;
  padding-left: 3px;
  color: #222;
}

.app-logo {
  width: 16px;
  height: 16px;
  margin-right: 5px;
}

.title-text {
  letter-spacing: -0.4px;
}

.win-controls {
  display: flex;
  margin-left: auto;
  margin-right: 20px;
  gap: 33px;
}

.win-controls svg {
  width: 12px;
  height: 12px;
}

.menubar {
  display: flex;
  align-items: center;
  gap: 15px;
  height: 21px;
  padding-left: 8px;
  color: #111;
  letter-spacing: -0.3px;
}

/* toolbar */
.toolbar {
  display: flex;
  align-items: center;
  height: 42px;
  background: #f5f5f5;
  border-bottom: 1px solid #d9d9d9;
  color: #555;
}

.tool {
  display: flex;
  align-items: center;
  justify-content: center;
  flex: none;
  width: 31px;
  height: 30px;
}

.tool svg {
  width: 21px;
  height: 21px;
}

.tool.home {
  width: 48px;
}

.tool.off {
  color: #bdbdbd;
}

.t-on {
  width: 30px;
  margin-left: 3px;
  background: #e6e6e6;
  color: #444;
}

.tool.push {
  margin-left: auto;
}

.sep {
  flex: none;
  width: 1px;
  height: 34px;
  background: #d4d4d4;
}

.caret {
  display: block;
  flex: none;
  width: 6px;
  height: 3px;
  margin: 0 1.5px;
  border-top: 3px solid #666;
  border-left: 3px solid transparent;
  border-right: 3px solid transparent;
}

.caret.off {
  border-top-color: #bbb;
}

.ml1 { margin-left: 1px; }
.ml2 { margin-left: 2px; }
.ml4 { margin-left: 4px; }
.ml5 { margin-left: 5px; }
.ml6 { margin-left: 6px; }
.ml7 { margin-left: 7px; }
.ml8 { margin-left: 8px; }
.ml9 { margin-left: 9px; }
.ml15 { margin-left: 15px; }
.back2 { margin-left: -2px; }

.fit-combo {
  display: flex;
  flex: none;
  align-items: center;
  width: 104px;
  height: 22px;
  margin-left: 11px;
  padding-left: 7px;
  background: #f5f5f5;
  border: 1px solid #c4c4c4;
  border-radius: 2px;
  font-size: 13px;
  color: #666;
}

.fit-combo span {
  flex: 1;
  padding-bottom: 2px;
}

.fit-combo b {
  display: flex;
  align-items: center;
  justify-content: center;
  width: 18px;
  height: 100%;
  border-left: 1px solid #d4d4d4;
}

.showme-tab {
  display: flex;
  align-items: center;
  align-self: flex-end;
  gap: 7px;
  width: 111px;
  height: 37px;
  margin-right: 4px;
  margin-left: 1px;
  padding: 0 0 6px 11px;
  background: #fafafa;
  border: 1px solid #ddd;
  border-bottom: none;
  font-size: 13px;
  letter-spacing: -0.1px;
  color: #444;
  position: relative;
  z-index: 3;
  margin-bottom: -1px;
}

.showme-tab svg {
  width: 14px;
  height: 20px;
}

/* main area */
.main {
  display: flex;
  height: 632px;
  background: #f5f5f5;
}

.data-pane {
  display: flex;
  flex-direction: column;
  flex: none;
  width: 210px;
  background: #fff;
  border-right: 1px solid #d4d4d4;
}

.pane-tabs {
  display: flex;
  height: 26px;
  font-size: 13px;
}

.pane-tab {
  flex: 1;
  padding: 3px 0 0 13px;
  background: #f5f5f5;
  border-left: 1px solid #d4d4d4;
  border-bottom: 1px solid #d4d4d4;
  color: #444;
  position: relative;
}

.pane-tab.active {
  flex: none;
  width: 77px;
  padding-left: 18px;
  background: #fff;
  border: none;
  font-weight: 700;
  color: #222;
}

.pane-tab:last-child {
  padding-left: 12px;
}

.collapse {
  position: absolute;
  right: 5px;
  top: -2px;
  font-size: 20px;
  color: #666;
}

.sources {
  display: flex;
  flex-direction: column;
  gap: 1px;
  padding: 3px 0 6px 11px;
  height: 71px;
  border-bottom: 1px solid #dcdcdc;
}

.source {
  display: flex;
  align-items: center;
  width: 187px;
  height: 20px;
  padding-left: 9px;
  color: #666;
  position: relative;
}

.source:not(:last-child) {
  padding-top: 1px;
}

.source svg {
  width: 16px;
  height: 16px;
  margin-right: 6px;
  color: #666;
}

.source.current {
  background: #e3e3e3;
}

.source em {
  position: absolute;
  left: 19px;
  top: 11px;
  width: 8px;
  height: 8px;
  border-radius: 50%;
  background: #2f7eb0;
}

.source em::after {
  content: "";
  position: absolute;
  left: 2px;
  top: 1.5px;
  width: 4px;
  height: 2.500px;
  border-left: 1px solid #fff;
  border-bottom: 1px solid #fff;
  transform: rotate(-45deg);
}

.search-row {
  display: flex;
  align-items: center;
  height: 21px;
  margin-top: 9px;
  padding-left: 8px;
}

.search-box {
  display: flex;
  align-items: center;
  justify-content: space-between;
  width: 130px;
  height: 21px;
  padding: 0 4px 0 7px;
  border: 1px solid #cfcfcf;
  border-radius: 2px;
  color: #b5b5b5;
}

.search-box svg {
  width: 13px;
  height: 13px;
}

.funnel {
  width: 15px;
  height: 15px;
  margin-left: 4px;
}

.mini-sep {
  width: 1px;
  height: 18px;
  margin: 0 6px;
  background: #ddd;
}

.list-ico {
  width: 13px;
  height: 11px;
  margin-right: 6px;
}

.pane-head {
  height: 20px;
  margin-top: 8px;
  padding-left: 18px;
  font-size: 13px;
  line-height: 20px;
  font-weight: 700;
  color: #222;
}

.field-wrap {
  display: flex;
  height: 424px;
  margin-top: 3px;
}

.fields {
  width: 193px;
}

.field {
  display: flex;
  align-items: center;
  height: 21px;
  color: #444;
  letter-spacing: -0.1px;
}

.field.italic {
  font-style: italic;
}

.abc {
  width: 47px;
  padding-left: 21px;
  font-size: 10px;
  color: #3d7fa0;
  font-style: normal;
}

.abc.geo svg {
  display: block;
  width: 11px;
  height: 11px;
  margin-left: 3px;
}

.num {
  width: 47px;
  padding-left: 23px;
}

.num svg {
  display: block;
  width: 12px;
  height: 12px;
}

.field-line {
  height: 1px;
  margin: 0 7px 1px 15px;
  background: #d9d9d9;
}

.scrollbar {
  display: flex;
  flex-direction: column;
  width: 15px;
  background: #f0f0f0;
}

.thumb {
  display: block;
  height: 313px;
  background: #cdcdcd;
}

.arrow {
  display: block;
  position: relative;
  height: 18px;
}

.arrow.down {
  margin-top: auto;
}

.arrow::after {
  content: "";
  position: absolute;
  left: 4px;
  top: 6px;
  width: 5px;
  height: 5px;
  border-left: 2px solid #555;
  border-top: 2px solid #555;
  transform: rotate(45deg);
}

.arrow.down::after {
  top: 3px;
  transform: rotate(225deg);
}

.params {
  flex: 1;
  border-top: 1px solid #dcdcdc;
}

.params .pane-head {
  margin-top: 2px;
  margin-bottom: 3px;
}

/* cards column */
.cards {
  display: flex;
  flex-direction: column;
  flex: none;
  gap: 6px;
  width: 160px;
  padding-left: 6px;
}

.card, .param-card {
  background: #fafafa;
  border: 1px solid #d4d4d4;
}

.card {
  width: 149px;
}

.card h5, .param-card h5 {
  font-size: 12px;
  font-weight: 400;
  color: #555;
}

.card h5 {
  padding: 6px 0 0 6px;
}

.pages {
  height: 61px;
}

.filters {
  height: 78px;
}

.marks {
  height: 286px;
}

.pill {
  display: flex;
  align-items: center;
  height: 20px;
  padding-left: 11px;
  border-radius: 10px;
  color: #fff;
  font-size: 12.5px;
}

.pill.dim {
  background: #4996b2;
}

.pill.mea {
  background: #00b180;
}

.filter-pill {
  width: 139px;
  margin: 9px 0 0 4px;
  padding-bottom: 1px;
}

.mark-combo {
  display: flex;
  align-items: center;
  width: 135px;
  height: 21px;
  margin: 12px 0 0 6px;
  padding-left: 12px;
  background: #f5f5f5;
  border: 1px solid #cfcfcf;
  border-radius: 2px;
  color: #777;
  font-size: 11.5px;
}

.ring {
  width: 10px;
  height: 10px;
  margin-right: 7px;
  border: 1px solid #888;
  border-radius: 50%;
}

.mark-combo span:nth-child(2) {
  flex: 1;
}

.mark-combo b {
  display: flex;
  align-items: center;
  justify-content: center;
  width: 18px;
  height: 100%;
  border-left: 1px solid #d4d4d4;
}

.mark-btns {
  display: grid;
  grid-template-columns: repeat(3, 41px);
  gap: 6px;
  margin: 6px 0 0 6px;
}

.mark-btn {
  display: flex;
  flex-direction: column;
  align-items: center;
  justify-content: flex-end;
  gap: 2px;
  height: 42px;
  padding-bottom: 1px;
  background: #fafafa;
  border: 1px solid #d4d4d4;
  font-size: 11px;
  color: #444;
  white-space: nowrap;
}

.mark-btn svg {
  width: 16px;
  height: 16px;
  color: #444;
}

.mark-pills {
  display: flex;
  flex-direction: column;
  gap: 3px;
  margin: 9px 0 0 11px;
}

.mark-row {
  display: flex;
  align-items: center;
}

.mark-row svg {
  width: 15px;
  height: 15px;
  margin-right: 5px;
  color: #555;
}

.mark-row .pill {
  width: 106px;
}

/* worksheet */
.sheet {
  display: flex;
  flex-direction: column;
  flex: 1;
  gap: 6px;
  padding-left: 1px;
  padding-right: 6px;
  position: relative;
}

.shelf {
  height: 28px;
  background: #fafafa;
  border: 1px solid #d4d4d4;
}

.shelf:first-child {
  height: 27px;
  border-top: none;
}

.shelf-label {
  display: flex;
  align-items: center;
  width: 125px;
  height: 100%;
  padding-left: 7px;
  border-right: 1px solid #d4d4d4;
  color: #555;
}

.shelf-label svg {
  width: 11px;
  height: 11px;
  margin-right: 8px;
}

.view-row {
  display: flex;
  gap: 6px;
}

.viz {
  flex: none;
  width: 834px;
  height: 559px;
  background: #ffa97d;
  border: 1px solid #b3b3b3;
  position: relative;
}

.viz-title {
  padding: 12px 0 0 10px;
  font-size: 20px;
  font-weight: 500;
  color: #333;
  letter-spacing: 0.1px;
}

.bubble {
  display: flex;
  align-items: center;
  justify-content: center;
  position: absolute;
  border-radius: 50%;
  text-align: center;
  line-height: 17px;
  color: #fff;
  letter-spacing: 0.2px;
}

.bubble.dark {
  color: #222;
}

.b-maha { left: 62px; top: 108px; width: 137px; height: 137px; background: #bdc050; padding-bottom: 2px; }
.b-raj { left: 197px; top: 129px; width: 99px; height: 99px; background: #53987f; padding-top: 2px; }
.b-tn { left: 295px; top: 130px; width: 122px; height: 122px; background: #7ea261; padding-top: 4px; }
.b-mp { left: 9px; top: 223px; width: 106px; height: 106px; background: #5a9679; }
.b-ap { left: 115px; top: 238px; width: 98px; height: 98px; background: #539580; padding-top: 2px; }
.b-bihar { left: 214px; top: 224px; width: 126px; height: 126px; background: #98ae5a; padding-top: 2px; }
.b-kar { left: 55px; top: 319px; width: 105px; height: 105px; background: #5f9a78; }
.b-guj { left: 159px; top: 326px; width: 97px; height: 97px; background: #4f9580; padding-top: 2px; }
.b-wb { left: 245px; top: 360px; width: 128px; height: 128px; background: #9cae5b; }
.b-up { left: 335px; top: 236px; width: 176px; height: 176px; background: #c0694e; border: 1.500px solid #1a1a1a; }

.tooltip {
  display: grid;
  grid-template-columns: 52px auto;
  align-content: center;
  position: absolute;
  left: 366px;
  top: 318px;
  width: 158px;
  height: 52px;
  padding: 1px 0 0 7px;
  background: #fff;
  border: 1px solid #d0d0d0;
  box-shadow: 1px 2px 4px rgba(0, 0, 0, 0.3);
  font-size: 13px;
  line-height: 18px;
  color: #2b3a4a;
}

.tip-key {
  color: #8a8f99;
  font-size: 12.5px;
}

.side {
  display: flex;
  flex-direction: column;
  flex: 1;
  gap: 6px;
}

.legend {
  height: 495px;
  background: #ffa97d;
  border: 1px solid #d4d4d4;
}

.param-card {
  height: 58px;
  padding: 6px 3px 0 3px;
}

.param-card h5 {
  padding-left: 3px;
}

.param-input {
  height: 20px;
  margin-top: 9px;
  padding-left: 2px;
  background: #fff;
  border: 1px solid #a09a9a;
  line-height: 18px;
  color: #555;
}

/* show me */
.showme {
  position: absolute;
  left: 788px;
  top: 0;
  width: 204px;
  height: 554px;
  padding: 14px 0 0 14px;
  background: #fafafa;
  box-shadow: 0 1px 4px rgba(0, 0, 0, 0.4);
  z-index: 2;
}

.thumbs {
  display: grid;
  grid-template-columns: repeat(3, 56px);
  grid-auto-rows: 42px;
  gap: 4px;
}

.thumb-tile {
  width: 56px;
  height: 42px;
  background: #fff;
  outline: 1px solid #e0e0e0;
  outline-offset: -1px;
}

.thumb-tile.selected {
  outline: 2px solid #e0683a;
  outline-offset: -2px;
}

.hint {
  margin: 17px 0 0 2px;
  color: #333;
}

.req {
  display: flex;
  align-items: center;
  height: 20px;
  margin: 8px 0 0 2px;
  color: #333;
}

.hint + .req {
  margin-top: 7px;
}

.req .pill {
  justify-content: center;
  padding-left: 0;
  margin-left: 2px;
}

.req-globe {
  width: 12px;
  height: 12px;
  margin: -2px 0 0 5px;
  color: #555;
}

.req .req-dim {
  width: 84px;
  margin-left: 5px;
}

.req-dims {
  width: 90px;
}

.req-mea {
  width: 79px;
}

.note {
  width: 180px;
  margin: 13px 0 0 2px;
  line-height: 16px;
  color: #999;
  letter-spacing: -0.1px;
}

/* sheet tabs */
.tabbar {
  display: flex;
  height: 28px;
  background: #e6e6e6;
  border-top: 1px solid #ccc;
  color: #666;
  letter-spacing: -0.15px;
}

.tab {
  display: flex;
  flex: none;
  align-items: center;
  padding-top: 1px;
  padding-left: 7px;
  border-right: 1px solid #ccc;
  white-space: nowrap;
  overflow: hidden;
}

.tab.active {
  background: #fff;
  font-weight: 600;
  color: #444;
  letter-spacing: -0.25px;
}

.src { width: 130px; padding-left: 9px; }
.src svg { width: 10px; height: 13px; margin-right: 5px; }
.t1 { width: 201px; }
.t2 { width: 147px; }
.t3 { width: 140px; }
.t4 { width: 121px; }
.t5 { width: 107px; }
.t6 { width: 150px; padding-left: 6px; }
.t7 { width: 119px; padding-left: 6px; }
.t8 { width: 138px; padding-left: 6px; }
.t9 { width: 16px; padding-left: 5px; }

.tab.add {
  justify-content: center;
  width: 32px;
  padding-left: 0;
}

.tab.add:last-child {
  width: 33px;
  border-right: none;
}

.tab.add svg {
  width: 19px;
  height: 19px;
}
```
